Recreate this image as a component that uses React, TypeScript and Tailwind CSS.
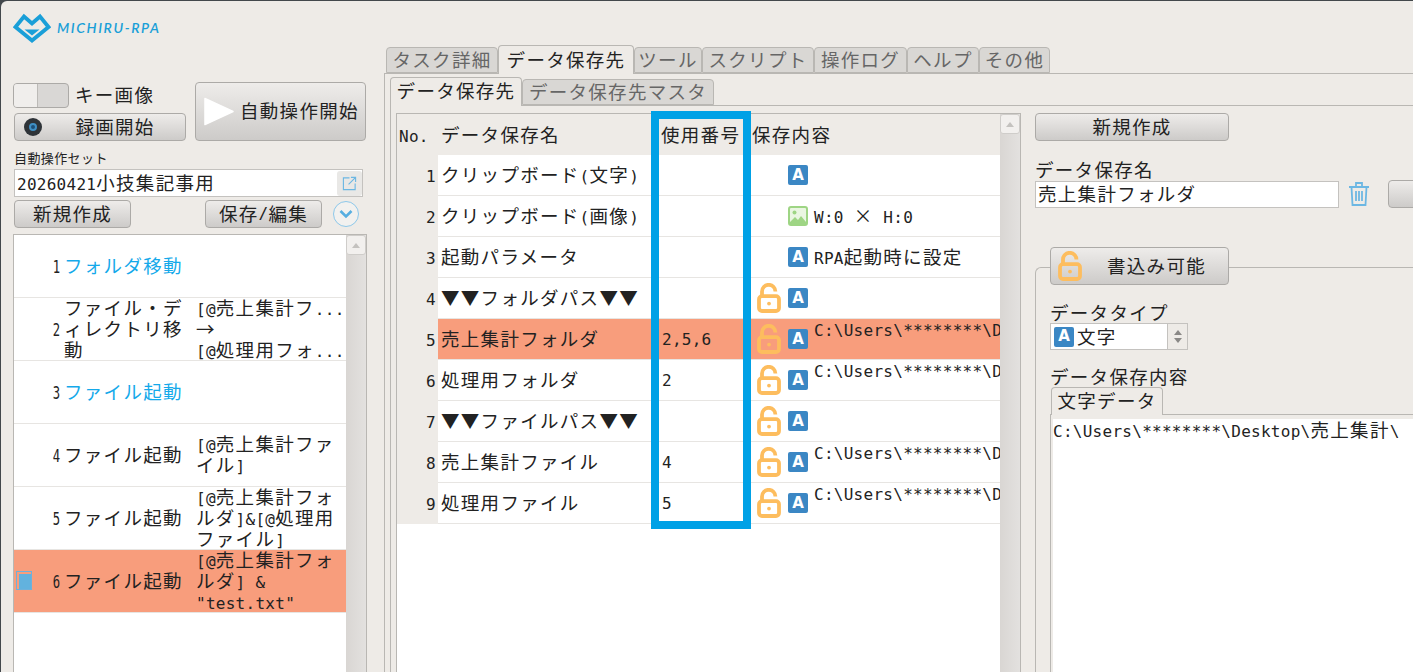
import type { ReactNode } from "react";

const ASCII = /([\x20-\x7e]+)/;

// CJK glyphs run full width, latin runs in a half-width mono so columns line up like the app
const Txt = ({ children }: { children: string }) => (
  <>
    {children.split(ASCII).map((part, i) =>
      ASCII.test(part) ? (
        <span key={i} className="whitespace-pre font-['DejaVu_Sans_Mono',monospace] text-[16px] leading-none tracking-[0.27px]">
          {part}
        </span>
      ) : (
        part
      )
    )}
  </>
);

const Btn = ({ className, children }: { className: string; children: ReactNode }) => (
  <div
    className={`flex shrink-0 items-center justify-center rounded-[4px] border border-[#acaaa7] bg-gradient-to-b from-[#eeecea] to-[#cdcbc9] pb-[1px] text-[#222] ${className}`}
  >
    {children}
  </div>
);

const LockIcon = ({ className }: { className: string }) => (
  <svg viewBox="0 0 24 30" className={className} fill="none">
    <path d="M5 13V8.5a6.7 6.7 0 0 1 13.4 0" stroke="#fdbd5e" strokeWidth="3.8" />
    <rect x="2" y="13.2" width="20" height="14.8" rx="3" stroke="#fdbd5e" strokeWidth="3.8" />
    <circle cx="12" cy="20.6" r="1.9" fill="#fdbd5e" />
  </svg>
);

const TypeA = () => (
  <span className="flex h-5 w-5 shrink-0 items-center justify-center rounded-[2px] bg-[#3b87c4] font-['DejaVu_Sans',sans-serif] text-[15px] font-bold leading-none tracking-normal text-white">
    A
  </span>
);

const TypeImage = () => (
  <svg viewBox="0 0 20 20" className="h-5 w-5 shrink-0">
    <rect x="1" y="1" width="18" height="18" rx="2" fill="#eaf6e2" stroke="#9ed584" strokeWidth="2" />
    <circle cx="6.5" cy="6.5" r="2" fill="#9ed584" />
    <path d="M2 16l5-5 3 3 3-4 5 6v2H2z" fill="#9ed584" />
  </svg>
);

const Scrollbar = () => (
  <div className="w-5 shrink-0 bg-gradient-to-r from-[#d9d6d3] to-[#e3e1df]">
    <div className="flex h-[20px] items-center justify-center rounded-[3px] border border-[#cfcdca] bg-[#f2f0ee]">
      <span className="h-0 w-0 border-x-[4px] border-b-[5px] border-x-transparent border-b-[#c4c2bf]" />
    </div>
  </div>
);

const steps: { no: number; name: string[]; detail: string[]; heading?: boolean; active?: boolean }[] = [
  { no: 1, name: ["フォルダ移動"], detail: [], heading: true },
  { no: 2, name: ["ファイル・デ", "ィレクトリ移", "動"], detail: ["[@売上集計フ...", "→", "[@処理用フォ..."] },
  { no: 3, name: ["ファイル起動"], detail: [], heading: true },
  { no: 4, name: ["ファイル起動"], detail: ["[@売上集計ファ", "イル]"] },
  { no: 5, name: ["ファイル起動"], detail: ["[@売上集計フォ", "ルダ]&[@処理用", "ファイル]"] },
  { no: 6, name: ["ファイル起動"], detail: ["[@売上集計フォ", "ルダ] &", "\"test.txt\""], active: true },
];

const slots: { no: number; name: string; used?: string; locked?: boolean; kind?: "image"; value?: string; top?: boolean; active?: boolean }[] = [
  { no: 1, name: "クリップボード(文字)" },
  { no: 2, name: "クリップボード(画像)", kind: "image", value: "W:0 × H:0" },
  { no: 3, name: "起動パラメータ", value: "RPA起動時に設定" },
  { no: 4, name: "▼▼フォルダパス▼▼", locked: true },
  { no: 5, name: "売上集計フォルダ", used: "2,5,6", locked: true, value: "C:\\Users\\********\\Desktop\\売上集計\\", top: true, active: true },
  { no: 6, name: "処理用フォルダ", used: "2", locked: true, value: "C:\\Users\\********\\Desktop\\処理用\\", top: true },
  { no: 7, name: "▼▼ファイルパス▼▼", locked: true },
  { no: 8, name: "売上集計ファイル", used: "4", locked: true, value: "C:\\Users\\********\\Desktop\\売上集計.xlsx", top: true },
  { no: 9, name: "処理用ファイル", used: "5", locked: true, value: "C:\\Users\\********\\Desktop\\処理用.xlsx", top: true },
];

const outerTabs = [
  { label: "タスク詳細", w: "w-[112px]" },
  { label: "データ保存先", w: "w-[136px]", active: true },
  { label: "ツール", w: "w-[68px]" },
  { label: "スクリプト", w: "w-[112px]" },
  { label: "操作ログ", w: "w-[93px]" },
  { label: "ヘルプ", w: "w-[72px]" },
  { label: "その他", w: "w-[71px]" },
];

const StepRow = ({ step }: { step: (typeof steps)[number] }) => (
  <div
    className={`flex h-[63px] items-center overflow-hidden border-b border-[#e7e5e2] pb-[2px] ${step.active ? "bg-[#f89d7c]" : ""}`}
  >
    <div className="w-[18px] pl-[2px]">
      {step.active && (
        <div className="h-[19px] w-[16px] border border-[#6fb1da] pl-[2px] pt-[2px]">
          <div className="h-full w-full bg-[#62b2de]" />
        </div>
      )}
    </div>
    <div className="w-[28px] text-right leading-[21px] text-[#222]">
      <span className="inline-block origin-right scale-x-[0.72] font-['DejaVu_Sans_Mono',monospace] text-[17px] leading-none tracking-normal">
        {step.no}
      </span>
    </div>
    <div className={`ml-[4px] w-[132px] shrink-0 leading-[21px] ${step.heading ? "text-[#14a9ea]" : "text-[#222]"}`}>
      {step.name.map((line) => (
        <div key={line}>{line}</div>
      ))}
    </div>
    <div className="w-[148px] shrink-0 whitespace-nowrap leading-[21px] text-[#222]">
      {step.detail.map((line) => (
        <div key={line}>
          <Txt>{line}</Txt>
        </div>
      ))}
    </div>
  </div>
);

const SlotRow = ({ slot }: { slot: (typeof slots)[number] }) => (
  <div className="flex h-[41px]">
    <div className="w-[41px] shrink-0 bg-[#eeebe7] pr-[2px] pt-[9px] text-right leading-[21px] text-[#222]">
      <Txt>{String(slot.no)}</Txt>
    </div>
    <div className={`flex min-w-0 flex-1 border-b border-[#e7e5e2] text-[#222] ${slot.active ? "bg-[#f89d7c]" : "bg-white"}`}>
      <div className="w-[213px] shrink-0 whitespace-nowrap pl-[3px] pt-[9px] leading-[21px]">
        <Txt>{slot.name}</Txt>
      </div>
      <div className="w-[100px] shrink-0 pl-[11px] pt-[8px] leading-[21px]">
        <Txt>{slot.used ?? ""}</Txt>
      </div>
      <div className="flex min-w-0 flex-1 items-center overflow-hidden">
        <div className="ml-[6px] w-[31px] shrink-0">{slot.locked && <LockIcon className="h-[30px] w-[24px]" />}</div>
        {slot.kind === "image" ? <TypeImage /> : <TypeA />}
        {slot.value && (
          <div className={`ml-[6px] whitespace-nowrap leading-[21px] ${slot.top ? "-mt-[21px]" : "-mt-[2px]"}`}>
            <Txt>{slot.value}</Txt>
          </div>
        )}
      </div>
    </div>
  </div>
);

export default function App() {
  return (
    <div className="relative flex h-[672px] w-[1413px] overflow-hidden bg-[#43484c] font-['Noto_Sans_CJK_JP',sans-serif] text-[18.5px] tracking-[1.3px]">
      <div className="mt-[1px] ml-[1px] flex h-[671px] w-[1412px] overflow-hidden rounded-tl-[6px] bg-[#eeebe7]">
        {/* left: logo, run controls, step list */}
        <div className="w-[385px] shrink-0 pl-[12px]">
          <div className="flex h-[81px] items-start pt-[12px]">
            <svg viewBox="0 0 38 30" className="h-[30px] w-[38px]" fill="none">
              <path d="M19 27.5 2.5 14 11 3.5l8 7 8-7L35.500 14z" stroke="#1a9fd8" strokeWidth="3.8" />
              <path d="M11.500 16.500h15l-7.500 6z" fill="#1a9fd8" />
            </svg>
            <span className="ml-[6px] mt-[5px] font-['Lato',sans-serif] text-[14px] font-semibold italic leading-[20px] tracking-[1.6px] text-[#1a9fd8]">
              MICHIRU-RPA
            </span>
          </div>

          <div className="flex">
            <div className="w-[174px] shrink-0">
              <div className="flex h-[31px] items-start pt-[1px]">
                <div className="flex h-[25px] w-[56px] overflow-hidden rounded-[4px] border border-[#acaaa7] bg-[#d9d7d5]">
                  <div className="w-[24px] border-r border-[#bcbab7] bg-[#f0eeec]" />
                </div>
                <span className="ml-[6px] text-[#222] leading-[23px]">キー画像</span>
              </div>
              <Btn className="relative ml-[1px] h-[28px] w-[172px]">
                <span className="absolute left-[9px] flex h-[18px] w-[18px] items-center justify-center rounded-full bg-[#2e3338]">
                  <span className="h-[8px] w-[8px] rounded-full border-2 border-[#3f8fc4] bg-[#1c4f78]" />
                </span>
                <span className="ml-[30px]">録画開始</span>
              </Btn>
            </div>
            <Btn className="ml-[8px] h-[59px] w-[171px] justify-start">
              <svg viewBox="0 0 32 32" className="ml-[8px] h-[31px] w-[30px]">
                <path d="M1 2l30 14L1 30z" fill="#fff" stroke="#fff" strokeLinejoin="round" strokeWidth="1.5" />
              </svg>
              <span className="ml-[6px] whitespace-nowrap">自動操作開始</span>
            </Btn>
          </div>

          <div className="mt-[7px] ml-[1px] text-[13px] leading-[20px] tracking-[0.4px] text-[#222]">自動操作セット</div>
          <div className="ml-[1px] mt-[1px] flex h-[28px] w-[349px] items-center border border-[#c4c2bf] bg-white pl-[2px] text-[#222]">
            <span className="-mt-[2px] flex-1 whitespace-nowrap leading-[24px]">
              <Txt>20260421小技集記事用</Txt>
            </span>
            <div className="flex h-[25px] w-[25px] items-center justify-center rounded-[3px] bg-[#e9e8e6]">
              <svg viewBox="0 0 16 16" className="h-[15px] w-[15px]" fill="none" stroke="#6cb7e3" strokeWidth="1.2">
                <path d="M8 2H1.500v12.500H14V8M9.500 1.500H14.500V6.500M14.500 1.500 7 9" />
              </svg>
            </div>
          </div>

          <div className="mt-[3px] ml-[1px] flex items-center">
            <Btn className="h-[28px] w-[117px]">新規作成</Btn>
            <Btn className="ml-[74px] h-[28px] w-[117px]">
              <Txt>保存/編集</Txt>
            </Btn>
            <span className="ml-[11px] flex h-[26px] w-[26px] items-center justify-center rounded-full border border-[#8dc8ea] bg-[#f2f1ef]">
              <svg viewBox="0 0 14 10" className="h-[10px] w-[14px]" fill="none" stroke="#57aee0" strokeWidth="2.6">
                <path d="M1.500 2 7 7.500 12.500 2" />
              </svg>
            </span>
          </div>

          <div className="mt-[6px] flex h-[440px] w-[354px] border border-[#b9b7b3] bg-white">
            <div className="w-[332px] shrink-0">
              {steps.map((step) => (
                <StepRow key={step.no} step={step} />
              ))}
            </div>
            <Scrollbar />
          </div>
        </div>

        {/* right: tab pages */}
        <div className="min-w-0 flex-1 pt-[44px]">
          <div className="flex items-end text-[#666]">
            {outerTabs.map((tab) => (
              <div
                key={tab.label}
                className={`flex shrink-0 items-center justify-center whitespace-nowrap rounded-t-[4px] border border-[#b9b7b3] pb-[1px] ${tab.w} ${
                  tab.active
                    ? "relative z-10 -mb-[1px] h-[29px] border-b-0 bg-[#eeebe7] text-[#222]"
                    : "h-[26px] bg-[#d9d7d4]"
                }`}
              >
                {tab.label}
              </div>
            ))}
          </div>
          <div className="-ml-[2px] h-[600px] border-l border-t border-[#b9b7b3] pl-[5px] pt-[3px]">
            <div className="flex items-end text-[#666]">
              <div className="relative z-10 -mb-[1px] flex h-[29px] w-[132px] items-center justify-center rounded-t-[4px] border border-b-0 border-[#b9b7b3] bg-[#eeebe7] pb-[2px] text-[#222]">
                データ保存先
              </div>
              <div className="flex h-[26px] w-[192px] items-center justify-center rounded-t-[4px] border border-[#b9b7b3] bg-[#d9d7d4] pb-[1px]">
                データ保存先マスタ
              </div>
            </div>
            <div className="flex h-[580px] border-l border-t border-[#b9b7b3] pl-[5px] pt-[7px]">
              {/* slot table */}
              <div className="flex h-[560px] w-[625px] shrink-0 border border-[#b9b7b3] bg-white">
                <div className="w-[603px] shrink-0">
                  <div className="flex h-[41px] items-center bg-[#eeebe7] whitespace-nowrap text-[#222]">
                    <div className="w-[44px] shrink-0 pl-[2px]">
                      <Txt>No.</Txt>
                    </div>
                    <div className="w-[220px] shrink-0">データ保存名</div>
                    <div className="w-[91px] shrink-0">使用番号</div>
                    <div>保存内容</div>
                  </div>
                  {slots.map((slot) => (
                    <SlotRow key={slot.no} slot={slot} />
                  ))}
                </div>
                <Scrollbar />
              </div>

              {/* slot editor */}
              <div className="ml-[14px] min-w-0 flex-1 text-[#222]">
                <Btn className="h-[28px] w-[194px]">新規作成</Btn>
                <div className="mt-[18px] leading-[21px]">データ保存名</div>
                <div className="flex items-center">
                  <div className="flex h-[27px] w-[304px] shrink-0 items-center border border-[#c4c2bf] bg-white pl-[2px]">売上集計フォルダ</div>
                  <svg viewBox="0 0 22 26" className="ml-[9px] h-[26px] w-[22px] shrink-0" fill="none" stroke="#6cb7e3" strokeWidth="1.8">
                    <path d="M1 6h20M8 5V2h6v3M3.500 6l1 18h13l1-18M8 10v10M11 10v10M14 10v10" />
                  </svg>
                  <Btn className="ml-[18px] h-[28px] w-[60px]">
                    <span />
                  </Btn>
                </div>

                <div className="relative mt-[59px] h-[420px] rounded-tl-[6px] border-l border-t border-[#b9b7b3] pl-[14px]">
                  <Btn className="absolute left-[14px] -top-[21px] h-[38px] w-[179px] justify-start">
                    <LockIcon className="ml-[7px] h-[30px] w-[24px]" />
                    <span className="ml-[25px]">書込み可能</span>
                  </Btn>
                  <div className="pt-[34px] leading-[21px]">データタイプ</div>
                  <div className="flex h-[27px] w-[138px] items-center border border-[#c4c2bf] bg-white pl-[3px]">
                    <TypeA />
                    <span className="ml-[3px] flex-1">文字</span>
                    <div className="flex h-full w-[20px] flex-col items-center justify-center gap-[3px] border-l border-[#c4c2bf] bg-[#eeebe7]">
                      <span className="h-0 w-0 border-x-[4px] border-b-[5px] border-x-transparent border-b-[#8a8886]" />
                      <span className="h-0 w-0 border-x-[4px] border-t-[5px] border-x-transparent border-t-[#8a8886]" />
                    </div>
                  </div>
                  <div className="mt-[16px] leading-[21px]">データ保存内容</div>
                  <div className="relative z-10 -mb-[1px] ml-[1px] flex h-[28px] w-[112px] items-center justify-center rounded-t-[4px] border border-b-0 border-[#b9b7b3] bg-[#eeebe7] pb-[1px]">
                    文字データ
                  </div>
                  <div className="h-[300px] border-l border-t border-[#b9b7b3] pl-[2px] pt-[4px]">
                    <div className="h-full whitespace-nowrap bg-white leading-[21px]">
                      <Txt>C:\Users\********\Desktop\売上集計\</Txt>
                    </div>
                  </div>
                </div>
              </div>
            </div>
          </div>
        </div>
      </div>

      {/* highlight drawn over the table in the reference */}
      <div className="absolute left-[651px] top-[111px] h-[418px] w-[100px] border-[8px] border-[#00a1e6]" />
    </div>
  );
}
